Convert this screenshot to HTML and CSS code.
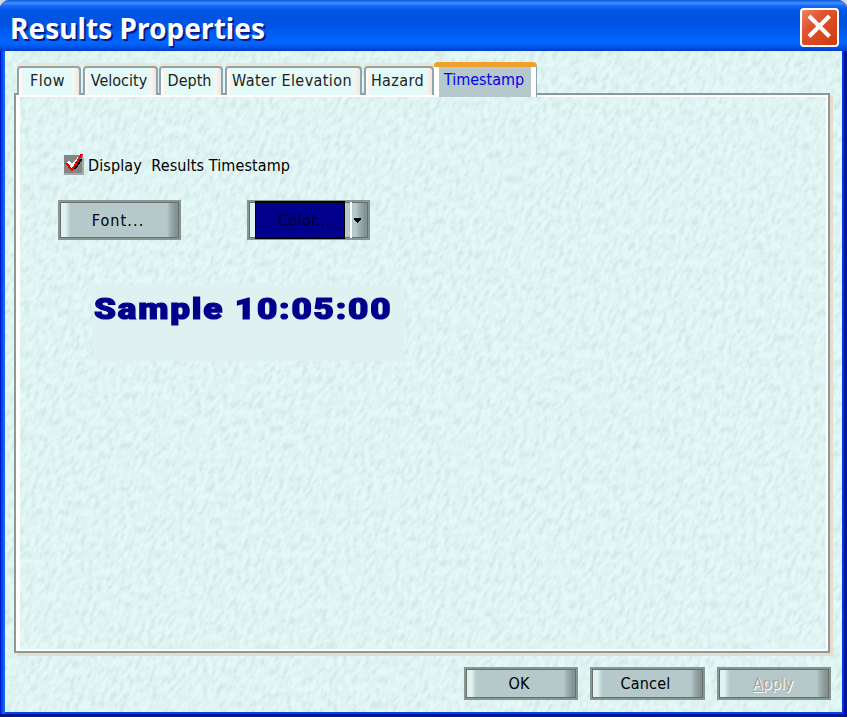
FILE: index.html
```html
<!DOCTYPE html>
<html lang="en">
<head>
<meta charset="utf-8">
<title>Results Properties</title>
<link rel="stylesheet" href="styles.css">
</head>
<body>
<div class="window">
  <header class="titlebar">
    <h1><span>Results Properties</span></h1>
    <button class="close" aria-label="Close"><svg width="39" height="39" viewBox="0 0 39 39">
      <defs><linearGradient id="red" x1="0" y1="0" x2="1" y2="1"><stop offset="0" stop-color="#ee8a6c"/><stop offset=".35" stop-color="#df5531"/><stop offset="1" stop-color="#cf3808"/></linearGradient></defs>
      <rect x="1" y="1" width="37" height="37" rx="3" fill="url(#red)" stroke="#fff" stroke-width="2"/>
      <path d="M10.500 9.500L28 27M28 9.500L10.500 27" stroke="#fff" stroke-width="4.200" stroke-linecap="square"/>
    </svg></button>
  </header>
  <main class="content">
    <svg class="texture" width="837" height="661" aria-hidden="true">
      <filter id="stone" x="0" y="0" width="100%" height="100%" color-interpolation-filters="sRGB">
        <feTurbulence type="fractalNoise" baseFrequency="0.22 0.12" numOctaves="2" seed="8"/>
        <feColorMatrix values="1 0 0 0 0  1 0 0 0 0  1 0 0 0 0  0 0 0 0 1"/>
        <feComponentTransfer>
          <feFuncR type="discrete" tableValues=".83 .83 .83 .83 .83 .85 .87 .873 .88 .89 .893 .893 .893 .893 .893 .893"/>
          <feFuncG type="discrete" tableValues=".92 .92 .92 .92 .92 .935 .95 .953 .96 .975 .98 .98 .98 .98 .98 .98"/>
          <feFuncB type="discrete" tableValues=".91 .91 .91 .91 .91 .925 .943 .946 .955 .97 .975 .975 .975 .975 .975 .975"/>
        </feComponentTransfer>
      </filter>
      <rect width="1300" height="661" transform="skewX(-20)" filter="url(#stone)"/>
    </svg>
    <nav class="tabs">
      <div class="tab flow"><span>Flow</span></div>
      <div class="tab velocity"><span>Velocity</span></div>
      <div class="tab depth"><span>Depth</span></div>
      <div class="tab water"><span>Water Elevation</span></div>
      <div class="tab hazard"><span>Hazard</span></div>
      <div class="tab selected"><span>Timestamp</span></div>
    </nav>
    <section class="panel">
      <label class="check"><svg width="20" height="22" viewBox="0 0 20 22" shape-rendering="crispEdges">
        <path fill="#828686" d="M0 2h19v19H0z"/><path fill="#a5a9a9" d="M18 5h2v17H0v-2h18z"/>
        <path d="M10 16L17 6" fill="none" stroke="#000" stroke-width="3"/>
        <path d="M4 9L8 13L15 5" fill="none" stroke="#fff" stroke-width="3"/>
        <path d="M2 10L8 17L18 1" fill="none" stroke="#f00000" stroke-width="2.200"/>
      </svg><span>Display&nbsp; Results Timestamp</span></label>
      <div class="options">
        <button class="button font"><span>Font...</span></button>
        <button class="button color"><span class="swatch"><span>Color...</span></span><span class="drop"><svg width="7" height="5" viewBox="0 0 7 5" shape-rendering="crispEdges"><path d="M0 0h7v2H6v1H5v1H4v1H3V4H2V3H1V2H0z"/></svg></span></button>
      </div>
      <div class="sample"><span>Sample 10:05:00</span></div>
    </section>
    <footer class="actions">
      <button class="button ok"><span>OK</span></button>
      <button class="button cancel"><span>Cancel</span></button>
      <button class="button apply" disabled><span><u>A</u>pply</span></button>
    </footer>
  </main>
</div>
</body>
</html>
```
FILE: styles.css
```css
* { box-sizing: border-box; }
body { margin: 0; background: #d4d9dc; overflow: hidden; font: 16px "DejaVu Sans Condensed", "DejaVu Sans", sans-serif; font-stretch: condensed; color: #000; }
button { font: inherit; font-stretch: condensed; color: #000; padding: 0; margin: 0; border: 0; background: none; }
span { white-space: nowrap; }
.window { width: 847px; height: 717px; background: linear-gradient(90deg, #0019cf 0 1px, #0046e8 1px 3px, #1664ee 3px 5px, #0046e8 5px 842px, #0038e0 842px 844px, #0010a0 844px); border-radius: 9px 9px 0 0; overflow: hidden; border-bottom: 3px solid #00138c; display: flex; flex-direction: column; }
.titlebar { height: 51px; flex: none; display: flex; justify-content: space-between; padding: 8px 8px 0 10px; background: linear-gradient(#0a54d8 0, #3b91ff 3px, #1767f4 6px, #0054e3 11px, #0053e4 25px, #0062fa 38px, #0067ff 43px, #0055ea 47px, #003cc8 51px); }
h1 { margin: 0; font: bold 28px/40px "Noto Sans", sans-serif; color: #fff; text-shadow: 2px 2px 0 #0a1b86; letter-spacing: .05px; }
.close { width: 39px; height: 39px; }
.close svg { display: block; }
.content { position: relative; width: 837px; height: 661px; margin-left: 5px; background: #e0f4f3; overflow: hidden; }
.texture { position: absolute; left: 0; top: 0; }
.tabs { position: relative; z-index: 2; display: flex; align-items: flex-end; height: 46px; padding: 11px 0 0 12px; }
.tab { height: 29px; margin-right: 2px; border: 2px solid #8ea5ae; border-bottom: 0; border-radius: 4px 4px 0 0; background: linear-gradient(90deg, #fff, #f7f1ec 4px, #e3faf9 5px, #e3faf9 calc(100% - 7px), #faf6f2 calc(100% - 6px), #ece7df); box-shadow: 0 -3px 0 #ebe5d4; color: #222; display: flex; justify-content: center; align-items: center; padding: 0 3px 2px 0; margin-bottom: 2px; }
.flow { width: 64px; letter-spacing: .5px; }
.velocity { width: 75px; margin-right: 1px; }
.depth { width: 64px; }
.water { width: 137px; letter-spacing: .4px; }
.hazard { width: 70px; margin-right: 0; letter-spacing: .4px; }
.selected { width: 103px; height: 35px; margin: 0; border: 0; border-top: 5px solid #f0a02c; border-right: 1px solid #8ea5ae; background: linear-gradient(90deg, #fff 5px, #b5c8cb 5px 97px, #fff 97px); box-shadow: none; color: #0000f4; padding: 0 2px 5px 0; }
.panel { position: relative; width: 816px; height: 560px; margin: -4px 0 0 9px; border: 2px solid #8c9998; box-shadow: inset 4px 2px #fff, inset -2px -2px #fff, 3px 3px #e3ddcc; padding: 56px 0 0 42px; }
.check { display: flex; align-items: center; height: 28px; margin-left: 6px; gap: 4px; letter-spacing: .12px; }
.check svg { margin-top: -3px; }
.options { display: flex; gap: 66px; margin-top: 21px; }
.button { height: 40px; display: flex; align-items: center; justify-content: center; border: 2px solid #859894; box-shadow: inset 1px 1px #6c6c6c, inset -1px -1px #6c6c6c; background: linear-gradient(90deg, #dff2f0 3px, #dff2f0 6px, #c7dcda 8px, #b5c8ca 11px, #b5c8ca calc(100% - 12px), #9fb0b0 calc(100% - 9px), #839391 calc(100% - 3px)); }
.font { width: 123px; letter-spacing: 1.1px; padding-right: 3px; }
.color { width: 123px; justify-content: flex-start; padding-left: 6px; }
.swatch { width: 90px; height: 38px; flex: none; background: #00008c; border: 1px solid #000; border-width: 2px 1px; display: flex; align-items: center; justify-content: center; padding-left: 9px; color: #000018; letter-spacing: .4px; }
.drop { height: 36px; width: 14px; margin-left: 5px; border-left: 2px solid #fff; display: flex; align-items: center; justify-content: center; padding-right: 1px; }
.sample { margin: 45px 0 0 35px; width: 311px; height: 76px; background: #dff2f1; font: 900 29px/49px Roboto, "Liberation Sans", sans-serif; color: #00008c; -webkit-text-stroke: 1.2px #00008c; letter-spacing: 1.5px; }
.sample span { display: inline-block; margin-left: 1px; transform: scaleX(1.21); transform-origin: left; }
.actions { position: relative; display: flex; gap: 12px; padding: 14px 0 0 459px; }
.actions .button { width: 114px; height: 33px; padding-right: 4px; }
.actions .cancel { width: 115px; letter-spacing: .2px; }
.actions .apply { color: #aaa89a; text-shadow: 1px 1px #fff; padding-right: 2px; }
u { text-underline-offset: 2px; }
```
